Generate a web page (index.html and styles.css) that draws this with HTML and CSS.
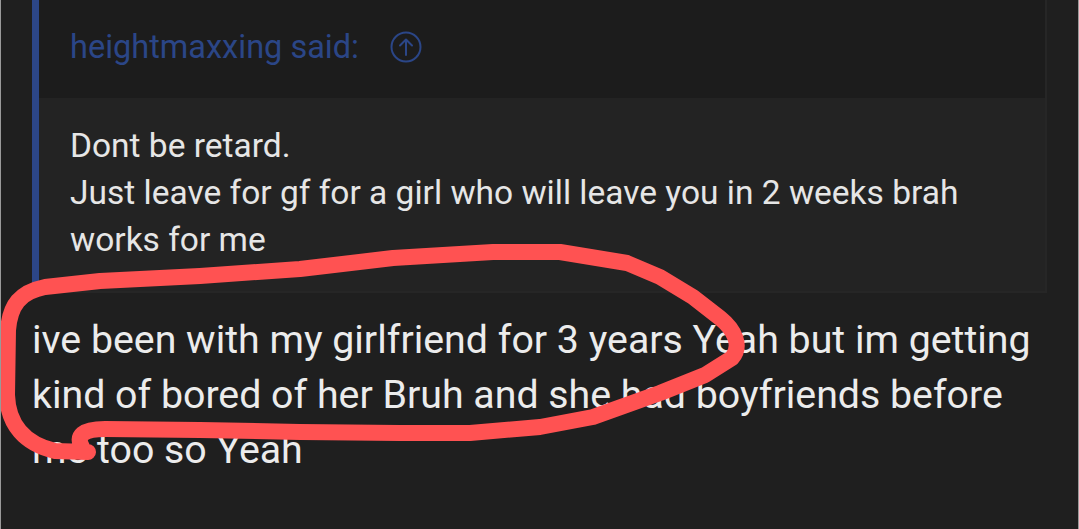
FILE: index.html
```html
<!DOCTYPE html>
<html>
<head>
<meta charset="utf-8">
<link rel="stylesheet" href="styles.css">
</head>
<body>
<div class="page">
  <blockquote class="quote">
    <div class="quote-head">
      <span class="quote-author">heightmaxxing said:</span>
      <svg class="quote-up" width="32" height="32" viewBox="0 0 32 32">
        <circle cx="16" cy="16" r="14.5" fill="none" stroke="#2b4687" stroke-width="2"/>
        <path d="M16 24 V9 M10 14.5 L16 8.5 L22 14.5" fill="none" stroke="#2b4687" stroke-width="2" stroke-linecap="round" stroke-linejoin="round"/>
      </svg>
    </div>
    <div class="quote-body">
      <p>Dont be retard.<br>Just leave for gf for a girl who will leave you in 2 weeks brah<br>works for me</p>
    </div>
  </blockquote>
  <div class="post-body">
    <p>ive been with my girlfriend for 3 years Yeah but im getting kind of bored of her Bruh and she had boyfriends before me too so Yeah</p>
  </div>
  <svg class="scribble" width="1079" height="529" viewBox="0 0 1079 529">
    <path d="M82 447 C76 436 82 429 105 429 L200 430 L300 432 L400 433 L470 433 L540 427 L593 417 L660 393 L705 375 L732 358 C742 346 735 330 720 318 L693 297 L660 277 L627 263 L560 252 L493 252 L393 258 L300 269 L200 276 L100 281 L45 287 C20 292 10 305 8 330 L7 395 C8 425 25 444 55 451 L88 452" fill="none" stroke="#ff5252" stroke-width="16" stroke-linecap="round" stroke-linejoin="round"/>
  </svg>
</div>
</body>
</html>
```
FILE: styles.css
```css
html, body {
  margin: 0;
  padding: 0;
  background: #1f1f1f;
}
.page {
  position: relative;
  width: 1077px;
  height: 529px;
  overflow: hidden;
  border-left: 1px solid #9a9a9a;
  border-right: 1px solid #9a9a9a;
  background: #1f1f1f;
  font-family: Roboto, "Liberation Sans", sans-serif;
}
.quote {
  margin: 0 31px 0 31px;
  border-left: 7px solid #2c4687;
  border-right: 2px solid #262626;
  border-bottom: 2px solid #262626;
}
.quote-head {
  height: 98px;
  box-sizing: border-box;
  background: #1c1c1c;
  padding: 27px 0 0 31px;
  display: flex;
  align-items: flex-start;
  gap: 31px;
}
.quote-author {
  color: #2b4687;
  font-size: 32.5px;
  line-height: 40px;
}
.quote-up {
  display: block;
  margin-top: 4px;
}
.quote-body {
  background: #232323;
  padding: 24px 20px 28px 31px;
}
.quote-body p {
  margin: 0;
  color: #e6e6e6;
  font-size: 33.5px;
  line-height: 47px;
}
.post-body {
  padding: 20px 40px 0 31px;
}
.post-body p {
  margin: 0;
  color: #ececec;
  font-size: 39.3px;
  line-height: 55px;
}
.scribble {
  position: absolute;
  left: -1px;
  top: 0;
  pointer-events: none;
}
```
